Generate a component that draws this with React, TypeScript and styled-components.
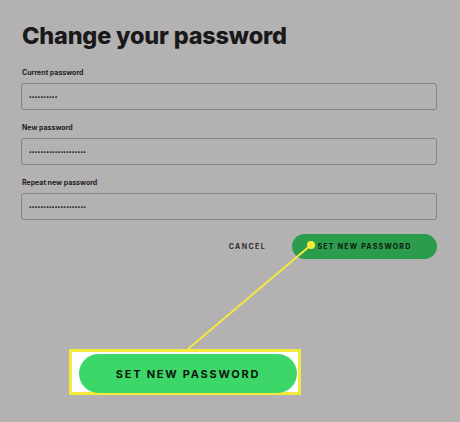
import React from "react";
import styled, { createGlobalStyle } from "styled-components";

const GlobalStyle = createGlobalStyle`
  html, body {
    margin: 0;
    padding: 0;
    background: #b3b1b2;
  }
  body {
    font-family: Inter, "Noto Sans", Arial, sans-serif;
  }
`;

const Page = styled.div`
  position: relative;
  width: 460px;
  height: 422px;
  overflow: hidden;
  background: #b3b1b2;
  padding: 22px 0 0 21px;
  box-sizing: border-box;
`;

const Title = styled.h1`
  margin: 0 0 18px 1px;
  font-size: 23.5px;
  font-weight: 800;
  letter-spacing: -0.2px;
  color: #1a191a;
  line-height: 28px;
`;

const Form = styled.div`
  width: 416px;
  display: flex;
  flex-direction: column;
`;

const Field = styled.div`
  display: flex;
  flex-direction: column;
  margin-bottom: 13px;
`;

const Label = styled.label`
  font-size: 7px;
  font-weight: 700;
  color: #1e1d1e;
  margin: 0 0 5px 1px;
  line-height: 10px;
`;

const Input = styled.div`
  height: 27px;
  border: 1px solid #858384;
  border-radius: 3px;
  box-sizing: border-box;
  display: flex;
  align-items: center;
  padding-left: 7px;
  font-size: 5.5px;
  letter-spacing: 0.25px;
  color: #1e1d1e;
  font-weight: 700;
`;

const Actions = styled.div`
  display: flex;
  justify-content: flex-end;
  align-items: center;
  gap: 26px;
  margin-top: 1px;
`;

const TextButton = styled.span`
  font-size: 7px;
  font-weight: 700;
  letter-spacing: 1.4px;
  color: #2e2d2e;
`;

const PillButton = styled.div<{ $big?: boolean }>`
  display: flex;
  align-items: center;
  justify-content: center;
  border-radius: 999px;
  background: ${(p) => (p.$big ? "#3dd769" : "#2a9c4b")};
  color: #0f1410;
  font-weight: 700;
  width: ${(p) => (p.$big ? "218px" : "145px")};
  height: ${(p) => (p.$big ? "39px" : "25px")};
  font-size: ${(p) => (p.$big ? "11px" : "7px")};
  letter-spacing: ${(p) => (p.$big ? "1.75px" : "1.25px")};
`;

const Callout = styled.div`
  margin: 90px 0 0 48px;
  width: 232px;
  height: 46px;
  box-sizing: border-box;
  border: 3px solid #f4ea3c;
  background: #ffffff;
  padding: 2px 0 0 7px;
`;

const Pointer = styled.svg`
  position: absolute;
  left: 0;
  top: 0;
  pointer-events: none;
`;

export default function App() {
  return (
    <Page>
      <GlobalStyle />
      <Title>Change your password</Title>
      <Form>
        <Field>
          <Label>Current password</Label>
          <Input>••••••••••</Input>
        </Field>
        <Field>
          <Label>New password</Label>
          <Input>••••••••••••••••••••</Input>
        </Field>
        <Field>
          <Label>Repeat new password</Label>
          <Input>••••••••••••••••••••</Input>
        </Field>
        <Actions>
          <TextButton>CANCEL</TextButton>
          <PillButton>SET NEW PASSWORD</PillButton>
        </Actions>
      </Form>
      <Callout>
        <PillButton $big>SET NEW PASSWORD</PillButton>
      </Callout>
      <Pointer width="460" height="422" viewBox="0 0 460 422">
        <line x1="311" y1="245" x2="188" y2="349" stroke="#f4ea3c" strokeWidth="2" />
        <circle cx="311" cy="245" r="4" fill="#f4ea3c" />
      </Pointer>
    </Page>
  );
}
